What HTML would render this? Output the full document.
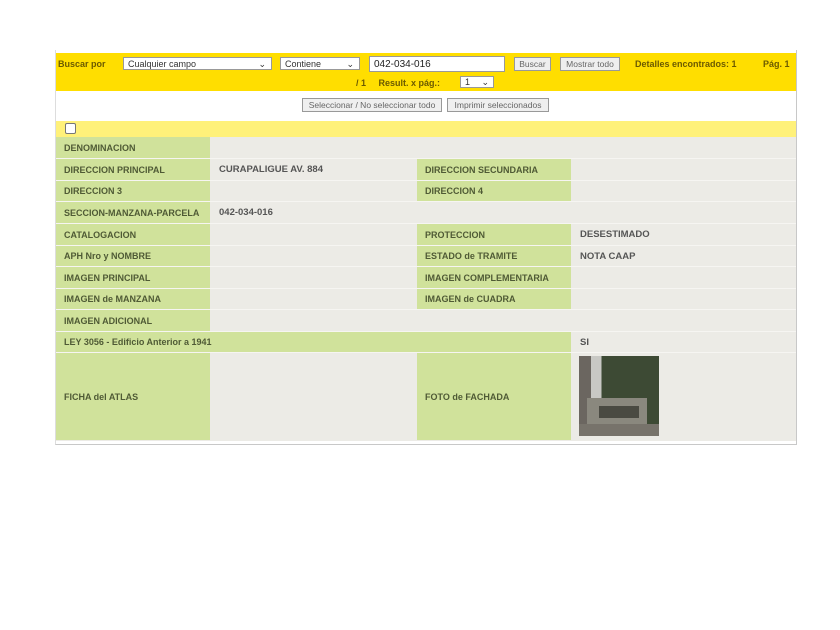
<!DOCTYPE html>
<html><head><meta charset="utf-8"><style>
body{margin:0;background:#fff;width:840px;height:630px;position:relative;font-family:"Liberation Sans",sans-serif;overflow:hidden}
.a{position:absolute}
.box{left:55px;top:50px;width:740px;height:394px;border:1px solid #c8c8c8;border-top:none;border-left:1px solid #ddd}
.yb{left:56px;top:53px;width:740px;height:38px;background:#ffde00}
.ly{left:56px;top:121px;width:740px;height:16px;background:#fff17a}
.t{font-size:9px;font-weight:bold;color:#6b5a00}
.sel{background:#fff;border:1px solid #999;font-size:9px;color:#333;height:13px;line-height:13px;padding-left:4px;box-sizing:border-box}
.btn{background:#efefef;border:1px solid #999;font-size:8.5px;color:#666;height:14px;line-height:12px;text-align:center;box-sizing:border-box}
.g{background:#d0e29b}
.e{background:#ecebe6}
.l{font-size:9px;font-weight:bold;color:#4f5a35;padding-left:8px;box-sizing:border-box;display:flex;align-items:center}
.v{font-size:9.5px;font-weight:bold;color:#555;padding-left:8px;box-sizing:border-box;display:flex;align-items:center}
.sep{left:56px;width:740px;height:1px;background:#f6f5f2}
</style></head><body>
<div class="a box"></div>
<div class="a yb"></div>
<div class="a t" style="left:58px;top:59px">Buscar por</div>
<div class="a sel" style="left:123px;top:57px;width:149px">Cualquier campo<span style="position:absolute;right:5px">⌄</span></div>
<div class="a sel" style="left:280px;top:57px;width:80px">Contiene<span style="position:absolute;right:5px">⌄</span></div>
<div class="a sel" style="left:369px;top:56px;width:136px;height:16px;line-height:15px;font-size:10px;color:#222">042-034-016</div>
<div class="a btn" style="left:514px;top:57px;width:37px">Buscar</div>
<div class="a btn" style="left:560px;top:57px;width:60px">Mostrar todo</div>
<div class="a t" style="left:635px;top:59px">Detalles encontrados: 1</div>
<div class="a t" style="left:763px;top:59px">Pág. 1</div>
<div class="a t" style="left:356px;top:78px">/ 1 &nbsp;&nbsp;&nbsp;&nbsp;Result. x pág.:</div>
<div class="a sel" style="left:460px;top:76px;width:34px;height:12px;line-height:11px">1<span style="position:absolute;right:4px">⌄</span></div>
<div class="a btn" style="left:302px;top:98px;width:140px">Seleccionar / No seleccionar todo</div>
<div class="a btn" style="left:447px;top:98px;width:102px">Imprimir seleccionados</div>
<div class="a ly"></div>
<div class="a" style="left:65px;top:123px;width:9px;height:9px;border:1px solid #777;border-radius:2px;background:#fff"></div>

<div class="a e" style="left:56px;top:137px;width:740px;height:304px"></div>
<div class="a sep" style="top:158px"></div>
<div class="a sep" style="top:180px"></div>
<div class="a sep" style="top:201px"></div>
<div class="a sep" style="top:223px"></div>
<div class="a sep" style="top:245px"></div>
<div class="a sep" style="top:266px"></div>
<div class="a sep" style="top:288px"></div>
<div class="a sep" style="top:309px"></div>
<div class="a sep" style="top:331px"></div>
<div class="a sep" style="top:352px"></div>

<div class="a g l" style="left:56px;top:137px;width:154px;height:21px">DENOMINACION</div>
<div class="a g l" style="left:56px;top:159px;width:154px;height:21px">DIRECCION PRINCIPAL</div>
<div class="a v" style="left:211px;top:159px;width:200px;height:21px">CURAPALIGUE AV. 884</div>
<div class="a g l" style="left:417px;top:159px;width:154px;height:21px">DIRECCION SECUNDARIA</div>
<div class="a g l" style="left:56px;top:181px;width:154px;height:20px">DIRECCION 3</div>
<div class="a g l" style="left:417px;top:181px;width:154px;height:20px">DIRECCION 4</div>
<div class="a g l" style="left:56px;top:202px;width:154px;height:21px">SECCION-MANZANA-PARCELA</div>
<div class="a v" style="left:211px;top:202px;width:200px;height:21px">042-034-016</div>
<div class="a g l" style="left:56px;top:224px;width:154px;height:21px">CATALOGACION</div>
<div class="a g l" style="left:417px;top:224px;width:154px;height:21px">PROTECCION</div>
<div class="a v" style="left:572px;top:224px;width:200px;height:21px">DESESTIMADO</div>
<div class="a g l" style="left:56px;top:246px;width:154px;height:20px">APH Nro y NOMBRE</div>
<div class="a g l" style="left:417px;top:246px;width:154px;height:20px">ESTADO de TRAMITE</div>
<div class="a v" style="left:572px;top:246px;width:200px;height:20px">NOTA CAAP</div>
<div class="a g l" style="left:56px;top:267px;width:154px;height:21px">IMAGEN PRINCIPAL</div>
<div class="a g l" style="left:417px;top:267px;width:154px;height:21px">IMAGEN COMPLEMENTARIA</div>
<div class="a g l" style="left:56px;top:289px;width:154px;height:20px">IMAGEN de MANZANA</div>
<div class="a g l" style="left:417px;top:289px;width:154px;height:20px">IMAGEN de CUADRA</div>
<div class="a g l" style="left:56px;top:310px;width:154px;height:21px">IMAGEN ADICIONAL</div>
<div class="a g l" style="left:56px;top:332px;width:515px;height:20px">LEY 3056 - Edificio Anterior a 1941</div>
<div class="a v" style="left:572px;top:332px;width:200px;height:20px">SI</div>
<div class="a g l" style="left:56px;top:353px;width:154px;height:87px">FICHA del ATLAS</div>
<div class="a g l" style="left:417px;top:353px;width:154px;height:87px">FOTO de FACHADA</div>
<div class="a" style="left:579px;top:356px;width:80px;height:80px;background:linear-gradient(90deg,#6b6660 0 15%,#c8c8c4 15% 28%,#3d4a34 28% 100%)">
<div class="a" style="left:8px;top:42px;width:60px;height:26px;background:#8a887e"></div>
<div class="a" style="left:20px;top:50px;width:40px;height:12px;background:#4a4a42"></div>
<div class="a" style="left:0;top:68px;width:80px;height:12px;background:#77736b"></div>
</div>
</body></html>
